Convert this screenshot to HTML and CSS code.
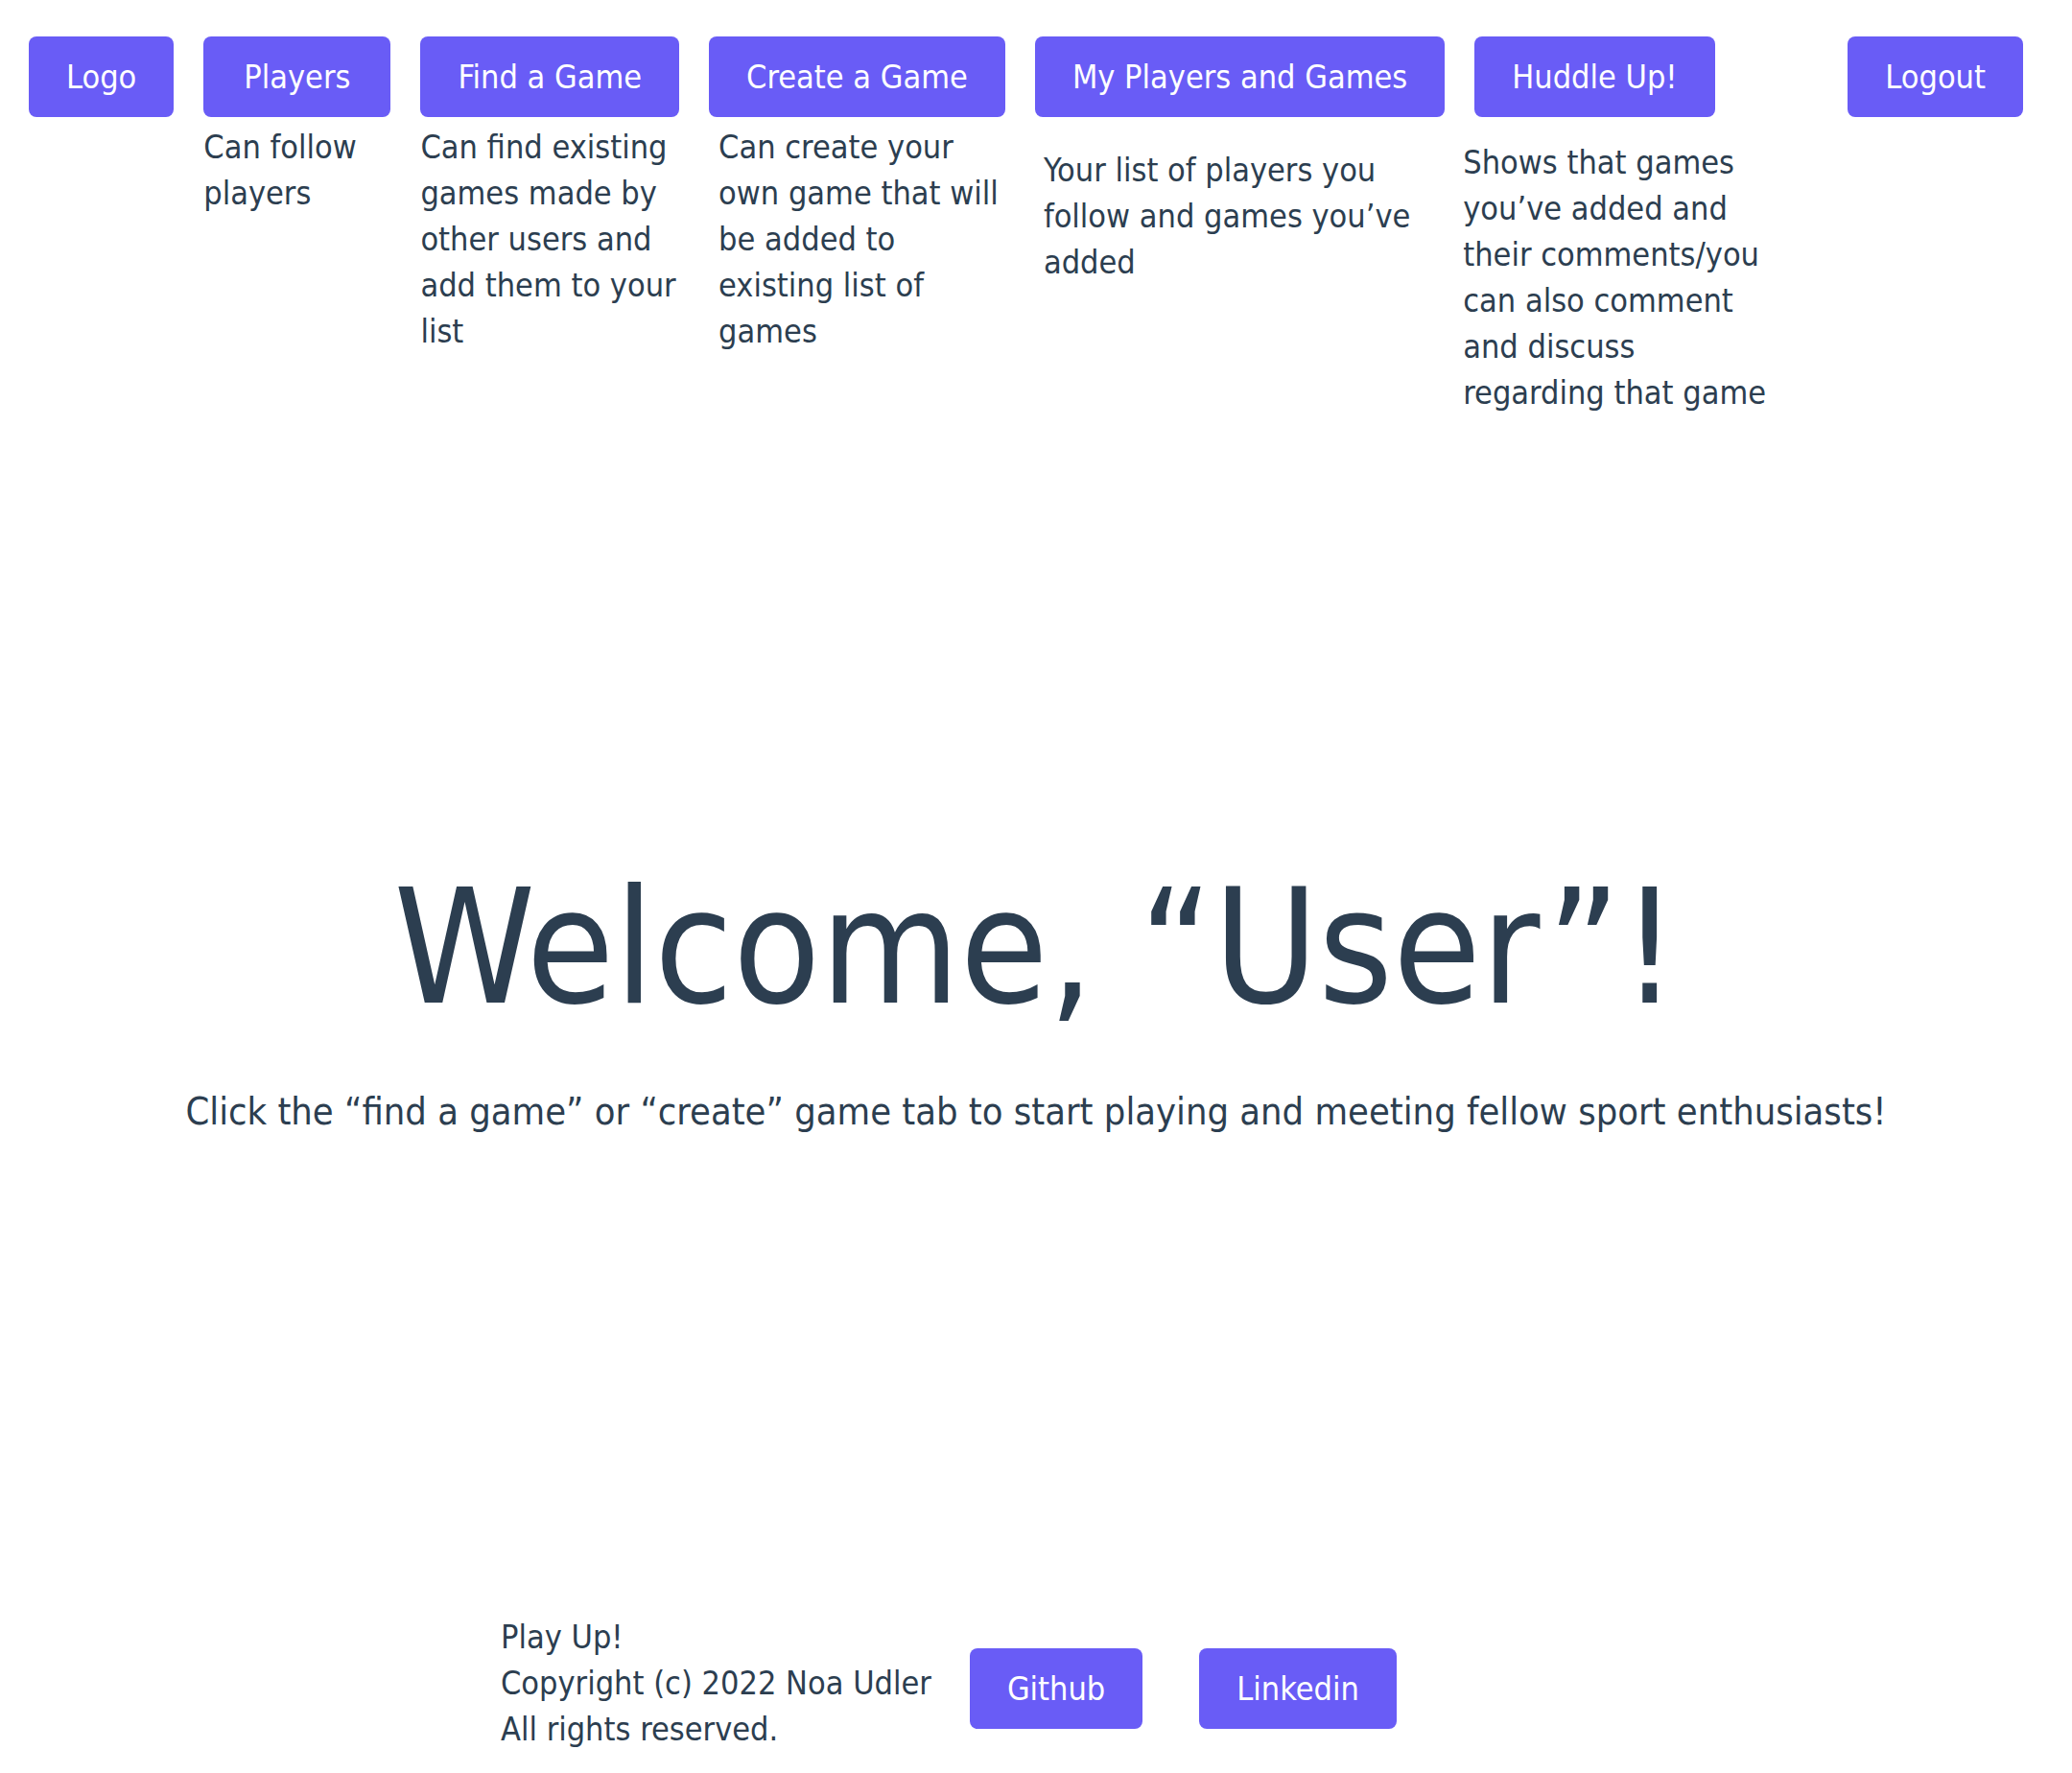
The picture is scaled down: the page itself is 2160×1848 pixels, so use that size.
FILE: index.html
```html
<!DOCTYPE html>
<html lang="en">
<head>
<meta charset="utf-8">
<title>Play Up!</title>
<link rel="stylesheet" href="styles.css">
</head>
<body>
<header class="topbar">
  <nav class="nav">
    <div class="nav-item"><a class="btn" href="#">Logo</a></div>
    <div class="nav-item">
      <a class="btn btn--wide" href="#">Players</a>
      <p class="desc">Can follow<br>players</p>
    </div>
    <div class="nav-item">
      <a class="btn" href="#">Find a Game</a>
      <p class="desc">Can find existing<br>games made by<br>other users and<br>add them to your<br>list</p>
    </div>
    <div class="nav-item">
      <a class="btn" href="#">Create a Game</a>
      <p class="desc desc--inset">Can create your<br>own game that will<br>be added to<br>existing list of<br>games</p>
    </div>
    <div class="nav-item">
      <a class="btn" href="#">My Players and Games</a>
      <p class="desc desc--mine">Your list of players you<br>follow and games you’ve<br>added</p>
    </div>
    <div class="nav-item">
      <a class="btn" href="#">Huddle Up!</a>
      <p class="desc desc--huddle">Shows that games<br>you’ve added and<br>their comments/you<br>can also comment<br>and discuss<br>regarding that game</p>
    </div>
    <div class="nav-item nav-item--end"><a class="btn" href="#">Logout</a></div>
  </nav>
</header>

<main class="hero">
  <h1 class="hero-title">Welcome, “User”!</h1>
  <p class="hero-sub">Click the “find a game” or “create” game tab to start playing and meeting fellow sport enthusiasts!</p>
</main>

<footer class="footer">
  <div class="footer-text">
    <div>Play Up!</div>
    <div>Copyright (c) 2022 Noa Udler</div>
    <div>All rights reserved.</div>
  </div>
  <a class="btn" href="#">Github</a>
  <a class="btn" href="#">Linkedin</a>
</footer>
</body>
</html>
```

FILE: styles.css
```css
* { box-sizing: border-box; }

html, body {
  margin: 0;
  padding: 0;
  background: #ffffff;
}

body {
  font-family: "DejaVu Sans Condensed", "DejaVu Sans", sans-serif;
  color: #2c3e50;
  font-size: 34px;
  line-height: 48px;
}

.btn {
  display: inline-block;
  background: #695cf6;
  color: #ffffff;
  text-decoration: none;
  font-size: 34px;
  line-height: 48px;
  padding: 18px 39px;
  border-radius: 8px;
  white-space: nowrap;
}

.btn--wide {
  padding-left: 42px;
  padding-right: 42px;
}

.topbar {
  padding: 38px 51px 0 30px;
}

.nav {
  display: flex;
  align-items: flex-start;
  gap: 31px;
}

.nav-item {
  display: flex;
  flex-direction: column;
  align-items: flex-start;
}

.nav-item--end {
  margin-left: auto;
}

.desc {
  margin: 7px 0 0 0;
  white-space: nowrap;
}

.desc--inset { margin-left: 10px; }
.desc--mine { margin-top: 31px; margin-left: 9px; }
.desc--huddle { margin-top: 23px; margin-left: -12px; }

.hero {
  text-align: center;
  padding-top: 472px;
}

.hero-title {
  margin: 0;
  font-size: 166px;
  line-height: 166px;
  font-weight: normal;
}

.hero-sub {
  margin: 63px 0 0 0;
  font-size: 39.5px;
  line-height: 48px;
}

.footer {
  display: flex;
  align-items: center;
  margin-top: 500px;
  padding-left: 522px;
}

.footer-text {
  line-height: 48px;
  margin-right: 40px;
  margin-bottom: 12px;
}

.footer .btn + .btn {
  margin-left: 59px;
}
```
